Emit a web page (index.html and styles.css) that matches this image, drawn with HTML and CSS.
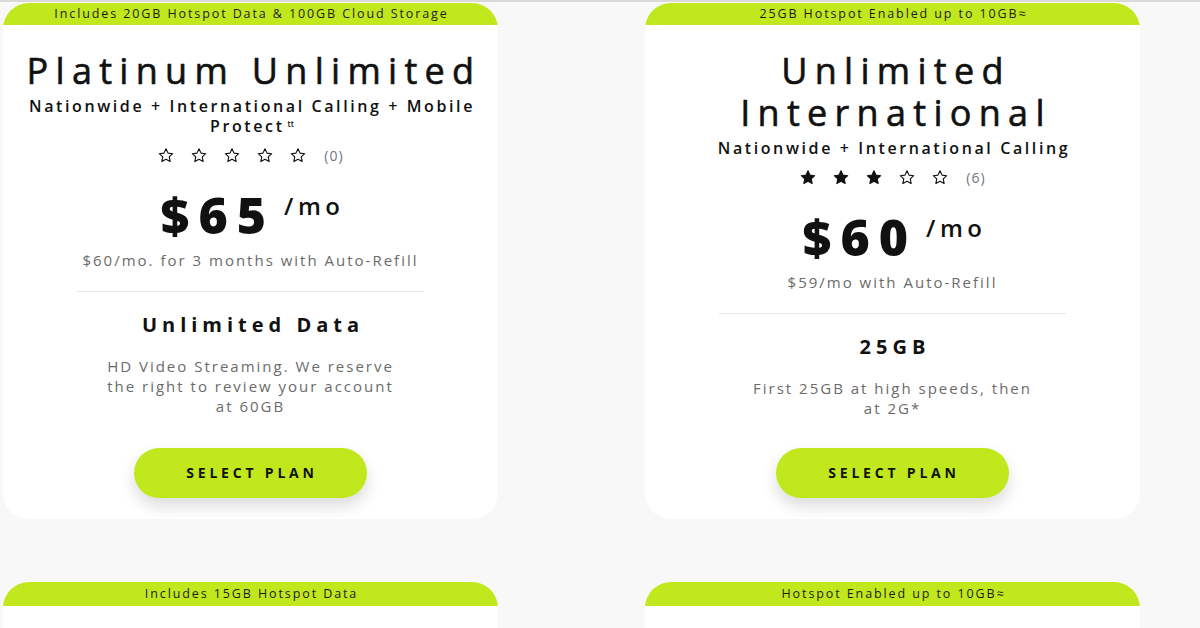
FILE: index.html
```html
<!DOCTYPE html>
<html lang="en">
<head>
<meta charset="utf-8">
<title>Plans</title>
<link rel="stylesheet" href="styles.css">
</head>
<body>
<div class="page">
  <div class="plans">
    <div class="card">
      <div class="banner">Includes 20GB Hotspot Data &amp; 100GB Cloud Storage</div>
      <h2 class="title">Platinum Unlimited</h2>
      <p class="subtitle">Nationwide + International Calling + Mobile <span class="word">Protect</span><sup>tt</sup></p>
      <div class="rating">
        <svg class="star" viewBox="0 0 24 24"><path d="M12 2.6l2.85 6.05 6.6.8-4.85 4.55 1.25 6.55L12 17.3l-5.85 3.25 1.25-6.55L2.55 9.45l6.6-.8z"/></svg>
        <svg class="star" viewBox="0 0 24 24"><path d="M12 2.6l2.85 6.05 6.6.8-4.85 4.55 1.25 6.55L12 17.3l-5.85 3.25 1.25-6.55L2.55 9.45l6.6-.8z"/></svg>
        <svg class="star" viewBox="0 0 24 24"><path d="M12 2.6l2.85 6.05 6.6.8-4.85 4.55 1.25 6.55L12 17.3l-5.85 3.25 1.25-6.55L2.55 9.45l6.6-.8z"/></svg>
        <svg class="star" viewBox="0 0 24 24"><path d="M12 2.6l2.85 6.05 6.6.8-4.85 4.55 1.25 6.55L12 17.3l-5.85 3.25 1.25-6.55L2.55 9.45l6.6-.8z"/></svg>
        <svg class="star" viewBox="0 0 24 24"><path d="M12 2.6l2.85 6.05 6.6.8-4.85 4.55 1.25 6.55L12 17.3l-5.85 3.25 1.25-6.55L2.55 9.45l6.6-.8z"/></svg>
        <span class="count">(0)</span>
      </div>
      <div class="price">$65<span class="per">/mo</span></div>
      <p class="note">$60/mo. for 3 months with Auto-Refill</p>
      <hr class="divider">
      <h3 class="data">Unlimited Data</h3>
      <p class="desc">HD Video Streaming. We reserve the right to review your account at 60GB</p>
      <a class="btn" href="#">SELECT PLAN</a>
    </div>

    <div class="card">
      <div class="banner">25GB Hotspot Enabled up to 10GB≈</div>
      <h2 class="title">Unlimited International</h2>
      <p class="subtitle">Nationwide + International Calling</p>
      <div class="rating">
        <svg class="star filled" viewBox="0 0 24 24"><path d="M12 2.6l2.85 6.05 6.6.8-4.85 4.55 1.25 6.55L12 17.3l-5.85 3.25 1.25-6.55L2.55 9.45l6.6-.8z"/></svg>
        <svg class="star filled" viewBox="0 0 24 24"><path d="M12 2.6l2.85 6.05 6.6.8-4.85 4.55 1.25 6.55L12 17.3l-5.85 3.25 1.25-6.55L2.55 9.45l6.6-.8z"/></svg>
        <svg class="star filled" viewBox="0 0 24 24"><path d="M12 2.6l2.85 6.05 6.6.8-4.85 4.55 1.25 6.55L12 17.3l-5.85 3.25 1.25-6.55L2.55 9.45l6.6-.8z"/></svg>
        <svg class="star" viewBox="0 0 24 24"><path d="M12 2.6l2.85 6.05 6.6.8-4.85 4.55 1.25 6.55L12 17.3l-5.85 3.25 1.25-6.55L2.55 9.45l6.6-.8z"/></svg>
        <svg class="star" viewBox="0 0 24 24"><path d="M12 2.6l2.85 6.05 6.6.8-4.85 4.55 1.25 6.55L12 17.3l-5.85 3.25 1.25-6.55L2.55 9.45l6.6-.8z"/></svg>
        <span class="count">(6)</span>
      </div>
      <div class="price">$60<span class="per">/mo</span></div>
      <p class="note">$59/mo with Auto-Refill</p>
      <hr class="divider">
      <h3 class="data">25GB</h3>
      <p class="desc">First 25GB at high speeds, then at 2G*</p>
      <a class="btn" href="#">SELECT PLAN</a>
    </div>

    <div class="card card-next">
      <div class="banner">Includes 15GB Hotspot Data</div>
    </div>

    <div class="card card-next">
      <div class="banner">Hotspot Enabled up to 10GB≈</div>
    </div>
  </div>
</div>
</body>
</html>
```
FILE: styles.css
```css
* { box-sizing: border-box; }

html, body {
  margin: 0;
  padding: 0;
}

body {
  background: #f8f8f8;
  font-family: "Open Sans", "DejaVu Sans", sans-serif;
  color: #111;
  overflow: hidden;
}

.page {
  border-top: 2px solid #d9d9d9;
  padding: 1px 0 0 3px;
}

.plans {
  display: grid;
  grid-template-columns: 495px 495px;
  column-gap: 147px;
  row-gap: 63px;
}

.card {
  background: #fff;
  border-radius: 26px;
  overflow: hidden;
  height: 516px;
  display: flex;
  flex-direction: column;
  align-items: center;
  text-align: center;
  padding-bottom: 21px;
}

.card-next {
  height: 300px;
}

.banner {
  align-self: stretch;
  height: 22px;
  line-height: 22px;
  background: #c0e81d;
  font-size: 12.5px;
  letter-spacing: 1.9px;
  padding-left: 2px;
  color: #1d1d1d;
  flex-shrink: 0;
}

.card-next .banner {
  height: 24px;
  line-height: 23px;
}

.title {
  margin: 25px 0 0;
  font-size: 36px;
  line-height: 42px;
  font-weight: 400;
  letter-spacing: 7.3px;
  padding: 0 0 0 7px;
  -webkit-text-stroke: 0.6px #111;
}

.subtitle {
  margin: 4px 0 0;
  font-size: 16px;
  line-height: 20px;
  font-weight: 600;
  letter-spacing: 2.6px;
  padding: 0 10px 0 13px;
}

.subtitle .word {
  white-space: nowrap;
}

.subtitle sup {
  font-size: 8px;
  letter-spacing: 0;
  vertical-align: 5px;
  line-height: 0;
  margin-left: 3px;
}

.rating {
  margin-top: 11px;
  height: 17px;
  display: flex;
  align-items: center;
  gap: 15px;
}

.star {
  width: 18px;
  height: 17px;
  fill: none;
  stroke: #111;
  stroke-width: 1.6;
  stroke-linejoin: round;
}

.star.filled {
  fill: #111;
}

.count {
  margin-left: 2px;
  font-size: 14px;
  line-height: 17px;
  color: #6f7680;
  letter-spacing: 1px;
}

.price {
  margin-top: 27px;
  font-size: 50px;
  line-height: 48px;
  font-weight: 800;
  letter-spacing: 9px;
  padding-left: 4px;
}

.per {
  font-size: 24px;
  line-height: 0;
  font-weight: 600;
  letter-spacing: 4.5px;
  vertical-align: 19px;
  margin-left: 9px;
}

.note {
  margin: 11px 0 0;
  font-size: 15px;
  line-height: 20px;
  color: #6b6b6b;
  letter-spacing: 2px;
}

.divider {
  width: 347px;
  margin: 21px 0 0;
  border: 0;
  border-top: 1px solid #e6e6e6;
  height: 0;
}

.data {
  margin: 20px 0 0;
  font-size: 20px;
  line-height: 26px;
  font-weight: 700;
  letter-spacing: 5px;
  padding-left: 5px;
}

.desc {
  margin: 18px 0 0;
  width: 300px;
  font-size: 15px;
  line-height: 20px;
  color: #6b6b6b;
  letter-spacing: 2px;
}

.btn {
  margin-top: auto;
  width: 233px;
  height: 50px;
  line-height: 50px;
  border-radius: 25px;
  background: #c0e81d;
  box-shadow: 0 8px 16px rgba(0, 0, 0, 0.14);
  color: #111;
  text-decoration: none;
  font-size: 14px;
  font-weight: 700;
  letter-spacing: 3.8px;
  padding-left: 3px;
  flex-shrink: 0;
}
```
